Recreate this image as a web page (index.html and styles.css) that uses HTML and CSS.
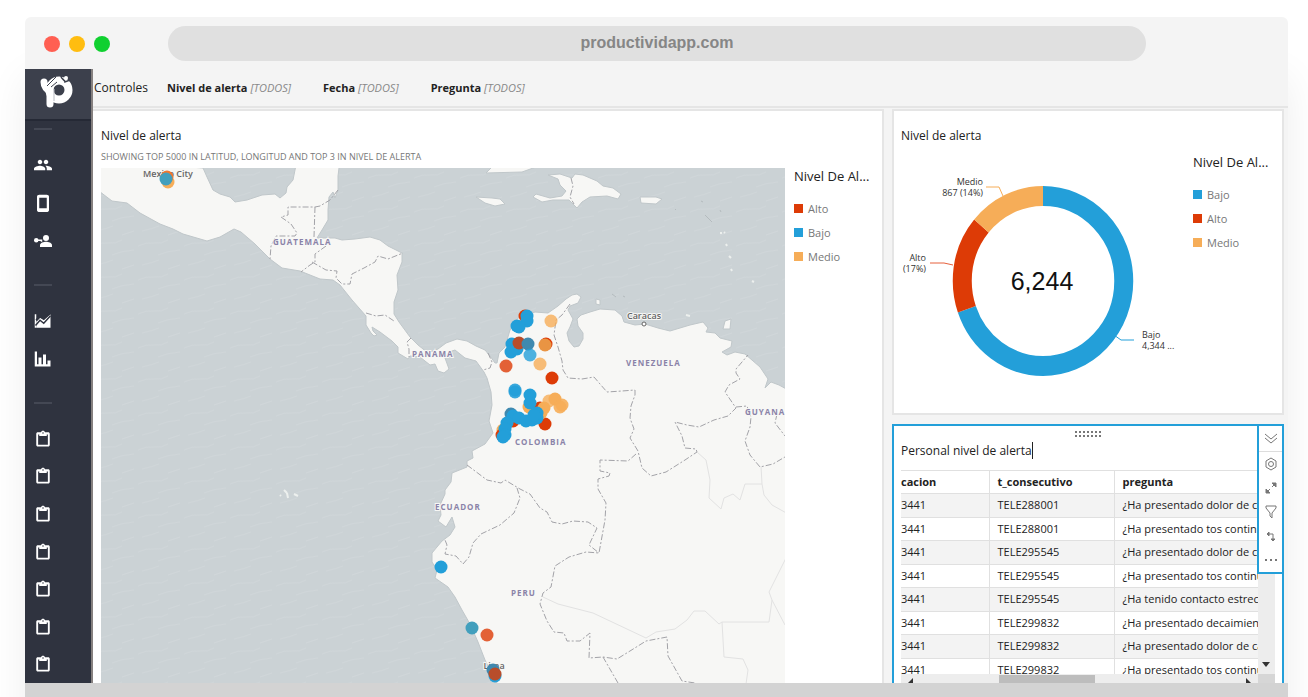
FILE: index.html
```html
<!DOCTYPE html>
<html lang="es">

<head>
    <meta charset="UTF-8">
    <meta name="viewport" content="width=device-width, initial-scale=1.0">
    <title>Productividapp</title>
    <link rel="stylesheet" href="styles.css">
</head>

<body>
    <!-- Shared icons -->
    <svg class="sprite" aria-hidden="true">
        <symbol id="clipboard" viewBox="0 0 24 24">
            <path d="M19 3h-4.2C14.400 1.800 13.300 1 12 1s-2.400.8-2.800 2H5c-1.100 0-2 .9-2 2v15c0 1.100.9 2 2 2h14c1.100 0 2-.9 2-2V5c0-1.100-.9-2-2-2zm-7 0a1 1 0 1 1 0 2 1 1 0 0 1 0-2zm6.500 16.500h-13V6H7v2h10V6h1.500v13.500z" />
        </symbol>
    </svg>

    <div class="browser">
        <header class="browser-bar">
            <div class="lights">
                <span class="light red"></span>
                <span class="light yellow"></span>
                <span class="light green"></span>
            </div>
            <input class="address" type="text" value="productividapp.com" aria-label="Dirección">
        </header>

        <div class="app">
            <nav class="sidebar">
                <a class="logo" href="#" aria-label="Inicio">
                    <svg viewBox="0 0 36 36" width="36" height="36">
                        <path d="M6 8c0 5 3 8 6 9" fill="none" stroke="#fff" stroke-width="7" stroke-linecap="round" />
                        <path d="M12 15v15" stroke="#fff" stroke-width="7" stroke-linecap="round" />
                        <circle cx="21" cy="16" r="9.500" fill="none" stroke="#fff" stroke-width="8" />
                        <path d="M9 12l9-9M13 13l6-5" stroke="#3c404c" stroke-width="1" />
                        <path d="M16 15v12" stroke="#b9bbc2" stroke-width="1" />
                        <path d="M23 2c0 4 4 3 4 6l5-2" fill="none" stroke="#3c404c" stroke-width="1.500" />
                        <circle cx="28" cy="4" r="2" fill="#fff" />
                    </svg>
                </a>
                <hr>
                <ul>
                    <li><a href="#" aria-label="Usuarios"><svg viewBox="0 0 24 24"><path d="M16 11c1.700 0 3-1.300 3-3s-1.300-3-3-3-3 1.300-3 3 1.300 3 3 3zm-8 0c1.700 0 3-1.300 3-3S9.700 5 8 5 5 6.300 5 8s1.300 3 3 3zm0 2c-2.700 0-8 1.300-8 4v2h15v-2c0-2.700-4.700-4-7-4zm8 0h-1c1.200.9 2 2 2 4v2h7v-2c0-2.700-5.300-4-8-4z" /></svg></a></li>
                    <li><a href="#" aria-label="Dispositivos"><svg viewBox="0 0 24 24"><path d="M17 1H7C5.500 1 4 2 4 3.500v18C4 23 5.500 24 7 24h10c1.500 0 3-1 3-2.500v-18C20 2 18.500 1 17 1zm0 18H7V5h10v14z" /></svg></a></li>
                    <li><a href="#" aria-label="Permisos"><svg viewBox="0 0 24 24"><circle cx="3" cy="11" r="3" /><path d="M4 10h7v3h-2v-1H4z" /><circle cx="16" cy="8" r="4" /><path d="M16 13c-3 0-8 1.500-8 4.500V20h16v-2.500c0-3-5-4.500-8-4.500z" /></svg></a></li>
                </ul>
                <hr>
                <ul>
                    <li><a href="#" aria-label="Tendencias"><svg viewBox="0 0 24 24"><path d="M1 3h2v18H1z" /><path d="M3 21v-8l5-6 5 3 9-7v18z" /><path d="M2 18l6-7 5 4 9-10" fill="none" stroke="#2f333f" stroke-width="2" /><path d="M3 11l5-5 5 3 8-7" fill="none" stroke="#2f333f" stroke-width="3" /></svg></a></li>
                    <li><a href="#" aria-label="Reportes"><svg viewBox="0 0 24 24"><path d="M1 2h3v17h18v3H1zM6 10h4v9H6zM12 6h4v13h-4zM18 14h4v5h-4z" /></svg></a></li>
                </ul>
                <hr>
                <ul class="forms">
                    <li><a href="#" aria-label="Formulario 1"><svg><use href="#clipboard" /></svg></a></li>
                    <li><a href="#" aria-label="Formulario 2"><svg><use href="#clipboard" /></svg></a></li>
                    <li><a href="#" aria-label="Formulario 3"><svg><use href="#clipboard" /></svg></a></li>
                    <li><a href="#" aria-label="Formulario 4"><svg><use href="#clipboard" /></svg></a></li>
                    <li><a href="#" aria-label="Formulario 5"><svg><use href="#clipboard" /></svg></a></li>
                    <li><a href="#" aria-label="Formulario 6"><svg><use href="#clipboard" /></svg></a></li>
                    <li><a href="#" aria-label="Formulario 7"><svg><use href="#clipboard" /></svg></a></li>
                </ul>
            </nav>

            <main class="content">
                <div class="controls">
                    <span class="controls-title">Controles</span>
                    <button type="button"><b>Nivel de alerta</b> <i>[TODOS]</i></button>
                    <button type="button"><b>Fecha</b> <i>[TODOS]</i></button>
                    <button type="button"><b>Pregunta</b> <i>[TODOS]</i></button>
                </div>

                <div class="board">
                    <section class="card map-card">
                        <h2>Nivel de alerta</h2>
                        <p class="subtitle">SHOWING TOP 5000 IN LATITUD, LONGITUD AND TOP 3 IN NIVEL DE ALERTA</p>
                        <div class="map-body">
                            <svg class="map" viewBox="101 168 684 515" preserveAspectRatio="xMinYMin slice">
                                <defs>
                                    <pattern id="waves" width="46" height="34" patternUnits="userSpaceOnUse">
                                        <path d="M0 8q8-4 16-3t14-3M20 17q9-4 22-5M4 27q10-2 17-5M30 31l12-4" />
                                    </pattern>
                                </defs>
                                <rect class="sea" x="100" y="168" width="1000" height="800" />
                                <rect x="100" y="168" width="1000" height="800" fill="url(#waves)" />

                                <!-- Mexico, Central America and South America -->
                                <path class="land" d="M95 160L203 168 207 177 213 190 220 194 230 197 235 202 247 200 262 195 275 194 280 198 286 193 287 187 293 180 297 160H340L338 176 338 190 335 198 333 192 329 197 328 210 328 220 322 230 317 238 335 238 342 240 355 239 370 237 380 240 388 246 402 253 402 262 397 275 398 290 394 302 394 314 399 322 410 337 418 345 428 353 438 349 446 343 457 339 467 341 476 346 485 350 490 356 495 363 497 363 499 353 505 347 510 330 518 318 527 315 535 312 548 313 558 306 566 299 572 295 577 294 581 297 578 303 570 306 568 310 573 319 570 327 567 333 569 341 574 347 579 346 583 339 583 333 578 326 577 319 581 315 590 312 600 309 615 310 622 316 624 322 635 325 645 324 658 328 670 331 680 328 690 325 703 322 708 328 706 332 715 333 720 338 732 341 731 347 722 352 727 355 735 352 745 354 760 367 768 379 765 388 771 382 779 385 790 391V700H505L497 683 490 670 485 660 478 642 470 624 462 610 455 597 448 587 435 578 437 570 432 562 432 553 442 541 450 535 455 527 452 517 446 527 438 521 441 515 440 505 445 494 445 490 451 482 452 473 467 467 467 461 473 458 472 451 485 444 493 433 489 421 492 405 491 392 487 378 484 372 476 361 465 358 455 350 449 352 445 358 449 369 444 373 438 371 435 364 430 365 420 357 410 356 408 359 398 353 398 347 392 341 380 332 372 327 373 331 377 335 374 336 371 333 366 325 366 316 352 300 340 285 333 280 320 279 300 271 282 268 270 259 255 244 241 232 234 229 220 237 207 241 183 234 173 229 160 224 140 213 127 203 112 201 95 188z" />
                                <path class="land" d="M548 175L560 174 572 178 575 174 583 175 597 181 603 186 613 188 621 194 618 199 607 196 590 197 582 202 577 208 569 200 553 200 542 202 533 197 536 194 550 198 562 196 566 191 560 185 558 179z" />
                                <path class="land" d="M476 197l16 1 8 1 5 5-10 2-10-3zM640 197l16 0 6 2-6 5-15-1zM486 173l6-6h44l-14 5zM725 321l6-2-1 10-7 0zM596 299l4 1 0 5-4-1z" />
                                <path class="islands" d="M284 490l3 3M287 493l1 5M294 494l4 2M280 495l1 1" />
                                <path class="islands" d="M720 233l2 0M724 232l1 1M726 244l1 2M729 256l2 2M731 269l1 2M752 281l2 1M686 315l4 1" />
                                <path class="region-sea" d="M675 209l1 1M701 201l2 1M705 215l3 3 4 4M720 210l1 2M612 294l4 3M623 296l2 1" />

                                <!-- Country borders -->
                                <path class="border" d="M338 190L330 200 320 206 315 207H288V215L281 217 291 224 297 233 295 236H276L271 246 270 259M315 207L314 237M326 246L315 254 315 262 310 265 301 272M312 262L326 270 337 271 336 278 342 284 350 284 352 274 364 268 375 262 378 256 388 259 403 253M366 313L376 316 385 315 394 321M411 338L407 342 409 349 409 357M488 353L492 362 490 368 483 370" />
                                <path class="border" d="M571 178L573 186 570 197 574 204M570 304L562 315 556 320 554 335 558 347 562 361 563 370 568 378 582 379 594 377 600 384 607 392 622 391 635 390 635 395 631 406 630 418 634 429 630 438 638 451 642 468 651 476 666 472 685 460 697 452 696 449 685 448 682 436 675 422 687 425 699 427 714 420 728 416 736 408 725 392 729 385 740 379 736 373 736 369 748 355M736 407L747 406 751 417 750 427 745 441 750 455 760 467 773 464 790 454M777 414L775 423 785 436" />
                                <path class="border" d="M467 465L487 480 501 483 505 480 520 489 530 494 540 508 547 512 552 522 562 524 573 521 588 522 597 528 589 545 599 553M636 454L628 461 600 460 600 471 610 473 609 476 598 479 598 489 606 503 605 520 599 553 586 552 569 557 555 566 551 587 543 593 540 604 547 621 554 632 564 633 567 641 580 641 590 633 589 658 603 657 617 659 630 651 646 641 667 637 668 656 682 681 695 683M603 657L618 683M517 488L520 498 514 513 500 525 481 534 473 543 469 557 463 564 456 556 445 554 447 545 445 540" />
                                <path class="region" d="M543 597L558 604 593 613 646 638 656 632 675 629 687 620 694 611 705 611 719 624 722 622 769 622 772 600 769 592 790 550M772 600L785 625M722 622L724 657 743 659 748 670 746 684M697 452L706 460 710 480 709 498 721 509 724 498 733 494 740 500 745 484 762 484 761 466M762 484L764 495 772 505 790 515" />

                                <g class="country">
                                    <text x="273" y="245">GUATEMALA</text>
                                    <text x="412" y="357">PANAMA</text>
                                    <text x="626" y="366">VENEZUELA</text>
                                    <text x="745" y="415">GUYANA</text>
                                    <text x="515" y="445">COLOMBIA</text>
                                    <text x="435" y="510">ECUADOR</text>
                                    <text x="511" y="596">PERU</text>
                                </g>
                                <g class="city">
                                    <text x="168" y="177">Mexico City</text>
                                    <text x="644" y="319">Caracas</text>
                                    <text x="494" y="669">Lima</text>
                                    <circle cx="644" cy="324" r="2" />
                                </g>

                                <g class="dots medio">
                                    <circle cx="168" cy="182" r="6.500" />
                                    <circle cx="551" cy="321" r="6.500" opacity=".8" />
                                    <circle cx="540" cy="364" r="6.500" opacity=".8" />
                                    <circle cx="529" cy="407" r="6.500" />
                                    <circle cx="503" cy="430" r="6.500" />
                                </g>
                                <g class="dots alto">
                                    <circle cx="167" cy="177" r="6.500" fill="#f2782f" />
                                    <circle cx="525" cy="316" r="6.500" />
                                    <circle cx="546" cy="344" r="6.500" />
                                    <circle cx="506" cy="366" r="6.500" opacity=".8" />
                                    <circle cx="552" cy="378" r="6.500" />
                                    <circle cx="545" cy="424" r="6.500" />
                                    <circle cx="540" cy="408" r="6.500" />
                                    <circle cx="513" cy="421" r="6.500" />
                                    <circle cx="502" cy="435" r="6.500" />
                                    <circle cx="487" cy="635" r="6.500" opacity=".8" />
                                </g>
                                <g class="dots medio">
                                    <circle cx="545" cy="345" r="6.500" fill="#e99443" />
                                    <circle cx="549" cy="401" r="6.500" opacity=".8" />
                                    <circle cx="555" cy="399" r="6.500" />
                                    <circle cx="562" cy="405" r="6.500" opacity=".9" />
                                    <circle cx="560" cy="407" r="6.500" opacity=".9" />
                                    <circle cx="544" cy="408" r="6.500" />
                                    <circle cx="541" cy="413" r="6.500" />
                                </g>
                                <g class="dots bajo">
                                    <circle cx="166" cy="179" r="6.500" fill="#429fbd" />
                                    <circle cx="527" cy="316" r="6.500" />
                                    <circle cx="527" cy="321" r="6.500" />
                                    <circle cx="517" cy="326" r="6.500" />
                                    <circle cx="519" cy="327" r="6.500" />
                                    <circle cx="512" cy="344" r="6.500" />
                                    <circle cx="511" cy="352" r="6.500" />
                                    <circle cx="517" cy="349" r="6.500" />
                                    <circle cx="519" cy="343" r="6.500" fill="#b84d2b" />
                                    <circle cx="528" cy="344" r="6.500" fill="#3f89af" />
                                    <circle cx="530" cy="355" r="6.500" opacity=".8" />
                                    <circle cx="515" cy="390" r="6.500" opacity=".9" />
                                    <circle cx="515" cy="392" r="6.500" opacity=".9" />
                                    <circle cx="530" cy="395" r="6.500" />
                                    <circle cx="530" cy="403" r="6.500" />
                                    <circle cx="511" cy="414" r="6.500" fill="#3f89af" />
                                    <circle cx="513" cy="416" r="6.500" />
                                    <circle cx="519" cy="418" r="6.500" />
                                    <circle cx="526" cy="421" r="6.500" />
                                    <circle cx="532" cy="420" r="6.500" />
                                    <circle cx="537" cy="418" r="6.500" />
                                    <circle cx="537" cy="413" r="6.500" />
                                    <circle cx="534" cy="415" r="6.500" />
                                    <circle cx="507" cy="423" r="6.500" />
                                    <circle cx="505" cy="429" r="6.500" />
                                    <circle cx="505" cy="435" r="6.500" />
                                    <circle cx="503" cy="437" r="6.500" />
                                    <circle cx="441" cy="567" r="6.500" />
                                    <circle cx="472" cy="628" r="6.500" fill="#429fbd" />
                                    <circle cx="493" cy="670" r="6.500" fill="#3f89af" />
                                    <circle cx="495" cy="676" r="6.500" />
                                    <circle cx="495" cy="674" r="6.500" fill="#b84d2b" />
                                </g>
                            </svg>
                            <div class="legend">
                                <h3>Nivel De Al...</h3>
                                <ul>
                                    <li class="alto">Alto</li>
                                    <li class="bajo">Bajo</li>
                                    <li class="medio">Medio</li>
                                </ul>
                            </div>
                        </div>
                    </section>

                    <div class="side">
                        <section class="card donut-card">
                            <h2>Nivel de alerta</h2>
                            <div class="donut-body">
                                <svg class="donut" viewBox="901 150 280 240" width="280" height="240">
                                    <g class="ring" transform="translate(1043 281) scale(.95 1) rotate(-90)">
                                        <circle class="bajo" r="85" pathLength="1000" stroke-dasharray="696 304" />
                                        <circle class="alto" r="85" pathLength="1000" stroke-dasharray="166 834" stroke-dashoffset="-696" />
                                        <circle class="medio" r="85" pathLength="1000" stroke-dasharray="138 862" stroke-dashoffset="-862" />
                                    </g>
                                    <g class="leaders">
                                        <path stroke="#f6ad58" d="M986 187h13l4 9" />
                                        <path stroke="#e6603c" d="M930 263h14l9 2" />
                                        <path stroke="#239fd9" d="M1114 335l7 5h13" />
                                    </g>
                                    <g class="slice-label">
                                        <text x="983" y="185" text-anchor="end">Medio</text>
                                        <text x="983" y="196" text-anchor="end">867 (14%)</text>
                                        <text x="926" y="261" text-anchor="end">Alto</text>
                                        <text x="926" y="272" text-anchor="end">(17%)</text>
                                        <text x="1142" y="338">Bajo</text>
                                        <text x="1142" y="349">4,344 ...</text>
                                    </g>
                                    <text class="total" x="1042" y="290">6,244</text>
                                </svg>
                                <div class="legend">
                                    <h3>Nivel De Al...</h3>
                                    <ul>
                                        <li class="bajo">Bajo</li>
                                        <li class="alto">Alto</li>
                                        <li class="medio">Medio</li>
                                    </ul>
                                </div>
                            </div>
                        </section>

                        <section class="card table-card">
                            <div class="drag"></div>
                            <h2><span class="caret">Personal nivel de alerta</span></h2>
                            <div class="table-body">
                                <div class="table-view">
                                    <table>
                                        <thead>
                                            <tr><th>cacion</th><th>t_consecutivo</th><th>pregunta</th></tr>
                                        </thead>
                                        <tbody>
                                            <tr><td>3441</td><td>TELE288001</td><td>¿Ha presentado dolor de cabeza?</td></tr>
                                            <tr><td>3441</td><td>TELE288001</td><td>¿Ha presentado tos continua?</td></tr>
                                            <tr><td>3441</td><td>TELE295545</td><td>¿Ha presentado dolor de cabeza?</td></tr>
                                            <tr><td>3441</td><td>TELE295545</td><td>¿Ha presentado tos continua?</td></tr>
                                            <tr><td>3441</td><td>TELE295545</td><td>¿Ha tenido contacto estrecho?</td></tr>
                                            <tr><td>3441</td><td>TELE299832</td><td>¿Ha presentado decaimiento?</td></tr>
                                            <tr><td>3441</td><td>TELE299832</td><td>¿Ha presentado dolor de cabeza?</td></tr>
                                            <tr><td>3441</td><td>TELE299832</td><td>¿Ha presentado tos continua?</td></tr>
                                        </tbody>
                                    </table>
                                </div>
                                <div class="scroll-y"><span class="arrow-down"></span></div>
                                <div class="scroll-x">
                                    <span class="arrow-left"></span>
                                    <span class="thumb"></span>
                                    <span class="arrow-right"></span>
                                </div>
                                <div class="scroll-corner"></div>
                            </div>
                            <div class="toolbar">
                                <button type="button" aria-label="Contraer"><svg viewBox="0 0 14 14"><path d="M1 2l6 5 6-5M1 6l6 5 6-5" /></svg></button>
                                <button type="button" aria-label="Formato"><svg viewBox="0 0 14 14"><path d="M7 1l5 3v6l-5 3-5-3V4z" /><circle cx="7" cy="7" r="2.500" /></svg></button>
                                <button type="button" aria-label="Maximizar"><svg viewBox="0 0 14 14"><path d="M8 6l4-4M6 8l-4 4" /><path class="solid" d="M8 2h4v4zM2 8v4h4z" /></svg></button>
                                <button type="button" aria-label="Filtrar"><svg viewBox="0 0 14 14"><path d="M2 1h10v2L8 8v5l-2-2V8L2 3z" /></svg></button>
                                <button type="button" aria-label="Ordenar"><svg viewBox="0 0 14 14"><path d="M3 5h6v7" /><path class="solid" d="M5 3L3 5l2 2zM7 10l2 2 2-2z" /></svg></button>
                                <button type="button" aria-label="Más opciones"><svg viewBox="0 0 14 14"><path d="M1 7h2M6 7h2M11 7h2" stroke-width="2" /></svg></button>
                            </div>
                        </section>
                    </div>
                </div>
            </main>
        </div>
        <footer class="browser-foot"></footer>
    </div>
</body>

</html>
```
FILE: styles.css
```css
/* General Styles */
* {
    box-sizing: border-box;
}

body {
    margin: 0;
    background-color: #fff;
    font-family: "Open Sans", "Noto Sans", sans-serif;
    font-size: 12px;
    color: #222;
    overflow: hidden;
}

h2, h3, p, ul {
    margin: 0;
    padding: 0;
    font-weight: normal;
}

ul {
    list-style: none;
}

button {
    padding: 0;
    border: none;
    background: none;
    font-family: inherit;
    cursor: pointer;
}

.sprite {
    display: none;
}

/* Browser Window */
.browser {
    display: flex;
    flex-direction: column;
    height: calc(100vh - 17px);
    margin: 17px 20px 0 25px;
    border-radius: 6px 6px 0 0;
    background-color: #f4f4f4;
    box-shadow: 0 60px 40px rgba(0, 0, 0, 0.07);
}

.browser-bar {
    display: flex;
    align-items: center;
    height: 52px;
    padding: 0 142px 0 19px;
    flex-shrink: 0;
}

.lights {
    display: flex;
    gap: 9px;
    width: 124px;
    padding-top: 2px;
}

.light {
    width: 16px;
    height: 16px;
    border-radius: 50%;
}

.red {
    background-color: #ff5f52;
}

.yellow {
    background-color: #ffbd10;
}

.green {
    background-color: #10d030;
}

.address {
    flex: 1;
    min-width: 0;
    height: 35px;
    border: none;
    border-radius: 18px;
    background-color: #e0e0e0;
    color: #868686;
    font: bold 16px "Liberation Sans", sans-serif;
    text-align: center;
}

.browser-foot {
    height: 14px;
    flex-shrink: 0;
    background-color: #d3d3d3;
}

.app {
    display: flex;
    flex: 1;
    min-height: 0;
}

/* Sidebar */
.sidebar {
    display: flex;
    flex-direction: column;
    width: 68px;
    flex-shrink: 0;
    border-right: 2px solid #85807f;
    background-color: #2f333f;
}

.logo {
    display: block;
    height: 52px;
    padding: 5px 13px;
    border-bottom: 2px solid #252935;
    background-color: #3c404c;
}

.sidebar hr {
    width: 18px;
    height: 2px;
    margin: 24px 0 16px 9px;
    border: none;
    background-color: #444854;
}

.sidebar .logo + hr {
    margin-top: 7px;
}

.sidebar li {
    display: flex;
    align-items: center;
    height: 38px;
    padding-left: 9px;
}

.sidebar li a {
    display: flex;
}

.sidebar li svg {
    width: 18px;
    height: 18px;
    fill: #fff;
}

.forms {
    display: flex;
    flex-direction: column;
    flex: 1;
}

.sidebar .forms li {
    flex: 1;
}

/* Controls */
.content {
    display: flex;
    flex-direction: column;
    flex: 1;
    min-width: 0;
}

.controls {
    display: flex;
    align-items: center;
    height: 39px;
    flex-shrink: 0;
    border-bottom: 2px solid #e5e5e5;
}

.controls-title {
    width: 74px;
    padding-left: 1px;
}

.controls button {
    margin-right: 32px;
    color: #222;
    font-size: 11px;
}

.controls i {
    color: #888;
}

/* Cards */
.board {
    display: flex;
    gap: 8px;
    flex: 1;
    min-height: 0;
    padding: 1px 4px 0 0;
}

.card {
    background-color: #fff;
    border: 2px solid #e5e5e5;
}

.card h2 {
    font-size: 12px;
    line-height: 18px;
}

.map-card {
    display: flex;
    flex-direction: column;
    flex: 1;
    min-width: 0;
    padding: 16px 0 0 8px;
    border-left: none;
    border-bottom: none;
}

.subtitle {
    height: 23px;
    color: #777;
    font-size: 9px;
    line-height: 24px;
}

.map-body {
    display: flex;
    gap: 9px;
    flex: 1;
    min-height: 0;
}

.legend {
    width: 88px;
    flex-shrink: 0;
}

.legend h3 {
    margin-bottom: 11px;
    font-size: 13px;
    line-height: 17px;
}

.legend li {
    display: flex;
    align-items: center;
    gap: 5px;
    height: 24px;
    color: #777;
    font-size: 11px;
}

.legend li::before {
    content: "";
    width: 9px;
    height: 9px;
    background-color: currentColor;
}

.legend .alto::before {
    background-color: #dd3b06;
}

.legend .bajo::before {
    background-color: #239fd9;
}

.legend .medio::before {
    background-color: #f6ad58;
}

/* Map */
.map {
    flex: 1;
    min-width: 0;
    height: 100%;
}

.sea {
    fill: #cbd2d5;
}

#waves path {
    fill: none;
    stroke: #d0d6d9;
    stroke-width: 1;
}

.land {
    fill: #f7f7f5;
    stroke: #c0c7ca;
    stroke-width: 1;
}

.islands {
    fill: none;
    stroke: #edf0ee;
    stroke-width: 2;
}

.region-sea {
    fill: none;
    stroke: #b4bbbe;
    stroke-width: 1;
}

.border {
    fill: none;
    stroke: #a3a3a8;
    stroke-width: 1;
    stroke-dasharray: 6 2 2 2;
}

.region {
    fill: none;
    stroke: #e2e2e2;
    stroke-width: 1;
}

.map text {
    paint-order: stroke;
    stroke: #f7f7f5;
    stroke-width: 2px;
}

.country {
    fill: #8a83a8;
    font-size: 8px;
    font-weight: bold;
    letter-spacing: 1px;
}

.city {
    fill: #666;
    font-size: 9px;
    font-weight: 600;
    text-anchor: middle;
}

.city circle {
    fill: #fff;
    stroke: #666;
}

.dots.alto {
    fill: #dd3b06;
}

.dots.bajo {
    fill: #239fd9;
}

.dots.medio {
    fill: #f6ad58;
}

/* Donut */
.side {
    display: flex;
    flex-direction: column;
    gap: 9px;
    width: 392px;
    flex-shrink: 0;
}

.donut-card {
    height: 306px;
    flex-shrink: 0;
    padding: 16px 0 0 7px;
}

.donut-body {
    display: flex;
    gap: 12px;
    padding-top: 5px;
}

.donut-body .legend {
    padding-top: 4px;
}

.ring circle {
    fill: none;
    stroke-width: 20;
}

.ring .bajo {
    stroke: #239fd9;
}

.ring .alto {
    stroke: #dd3b06;
}

.ring .medio {
    stroke: #f6ad58;
}

.leaders {
    fill: none;
    stroke-width: 1;
}

.slice-label {
    fill: #333;
    font-size: 9px;
}

.total {
    fill: #111;
    font-family: "Liberation Sans", sans-serif;
    font-size: 25px;
    text-anchor: middle;
}

/* Table */
.table-card {
    display: flex;
    flex-direction: column;
    position: relative;
    flex: 1;
    min-height: 0;
    padding: 4px 7px 0;
    border-color: #239fd9;
    border-bottom: none;
}

.drag {
    width: 28px;
    height: 8px;
    margin: 0 auto;
    background: radial-gradient(circle, #777 1px, transparent 1px) 0 0 / 4px 4px;
}

.table-card h2 {
    height: 32px;
    padding-top: 4px;
}

.caret {
    border-right: 1px solid #222;
}

.table-body {
    display: grid;
    grid-template-columns: 1fr 17px;
    grid-template-rows: 1fr 9px;
    flex: 1;
    min-height: 0;
}

.table-view {
    overflow: hidden;
    min-height: 0;
}

table {
    width: 100%;
    height: 212px;
    border-collapse: collapse;
    table-layout: fixed;
    border-top: 1px solid #e0e0e0;
}

th, td {
    padding: 0 0 0 8px;
    border-bottom: 1px solid #e0e0e0;
    border-left: 1px solid #e0e0e0;
    font-size: 11px;
    line-height: 16px;
    text-align: left;
    white-space: nowrap;
}

th {
    height: 23px;
}

th:first-child, td:first-child {
    width: 88px;
    padding-left: 0;
    border-left: none;
}

th:nth-child(2) {
    width: 125px;
}

tbody tr:nth-child(odd) {
    background-color: #f3f3f3;
}

.scroll-y {
    display: flex;
    align-items: flex-end;
    background-color: #ededed;
    padding: 0 4px 7px;
}

.scroll-x {
    display: flex;
    align-items: flex-end;
    justify-content: space-between;
    overflow: hidden;
    padding: 0 7px;
    background-color: #ededed;
}

.scroll-corner {
    background-color: #d6d6d6;
}

.thumb {
    width: 96px;
    height: 8px;
    margin-right: 66px;
    background-color: #bdbdbd;
}

.arrow-down {
    border: 4px solid transparent;
    border-top: 5px solid #333;
    border-bottom: none;
}

.arrow-left {
    border-top: 5px solid transparent;
    border-right: 5px solid #333;
}

.arrow-right {
    border-top: 5px solid transparent;
    border-left: 5px solid #333;
}

.toolbar {
    position: absolute;
    top: -2px;
    right: -2px;
    width: 27px;
    border: 2px solid #239fd9;
    background-color: #fff;
}

.toolbar button {
    display: flex;
    align-items: center;
    justify-content: center;
    width: 100%;
    height: 24px;
}

.toolbar button:first-child {
    height: 26px;
    border-bottom: 1px solid #ddd;
}

.toolbar svg {
    width: 14px;
    height: 14px;
    fill: none;
    stroke: #777;
    stroke-width: 1;
}

.toolbar .solid {
    fill: #777;
}
```
